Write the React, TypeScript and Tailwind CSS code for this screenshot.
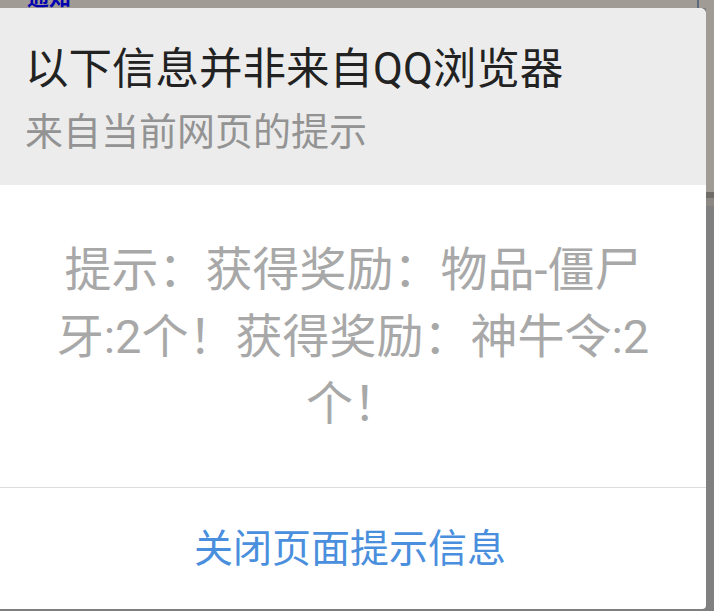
const cjk = { fontFamily: 'Roboto, "Noto Sans CJK SC", "Noto Sans", sans-serif' };

export default function App() {
  return (
    <div
      className="relative w-[714px] h-[611px] overflow-hidden bg-[#808080] flex flex-col"
      style={cjk}
    >
      {/* page behind the dialog */}
      <div className="h-[8px] bg-[#a09c95] relative overflow-hidden shrink-0">
        <span className="absolute left-[27px] top-[-15px] text-[22px] leading-[26px] font-bold text-[#0000b0]">
          通知
        </span>
        <div className="absolute left-[697px] top-[-10px] w-[30px] h-[22px] border-2 border-[#5c6b7c]" />
      </div>

      <div className="flex flex-1 min-h-0">
        <div className="relative z-10 w-[706px] bg-white rounded-tr-[6px] rounded-br-[4px] overflow-hidden flex flex-col">
          <div className="h-[177px] bg-[#ececec] px-[25px] pt-[36px] shrink-0">
            <div className="text-[43.5px] leading-[52px] text-[#222222] whitespace-nowrap">
              以下信息并非来自QQ浏览器
            </div>
            <div className="mt-[13px] text-[38px] leading-[46px] text-[#939393] whitespace-nowrap">
              来自当前网页的提示
            </div>
          </div>

          <div className="h-[302px] flex items-center justify-center px-[48px] shrink-0">
            <p className="text-[47px] leading-[67px] text-[#a8a8a8] text-center">
              提示：获得奖励：物品-僵尸牙:2个！获得奖励：神牛令:2个！
            </p>
          </div>

          <div className="h-px bg-[#dddddd] shrink-0" />

          <div className="flex-1 flex items-center justify-center pr-[6px]">
            <span className="text-[39px] leading-[48px] text-[#4a8fdd]">关闭页面提示信息</span>
          </div>
        </div>

        <div className="w-[8px] flex flex-col">
          <div className="h-[184px] bg-[#a09c95]" />
          <div className="h-[6px] bg-[#6f6c68]" />
          <div className="h-[8px] bg-[#8c8985]" />
          <div className="flex-1 bg-[#808080]" />
        </div>
      </div>

      <div className="h-[2px] bg-[#7f7f7f] shrink-0" />
    </div>
  );
}
